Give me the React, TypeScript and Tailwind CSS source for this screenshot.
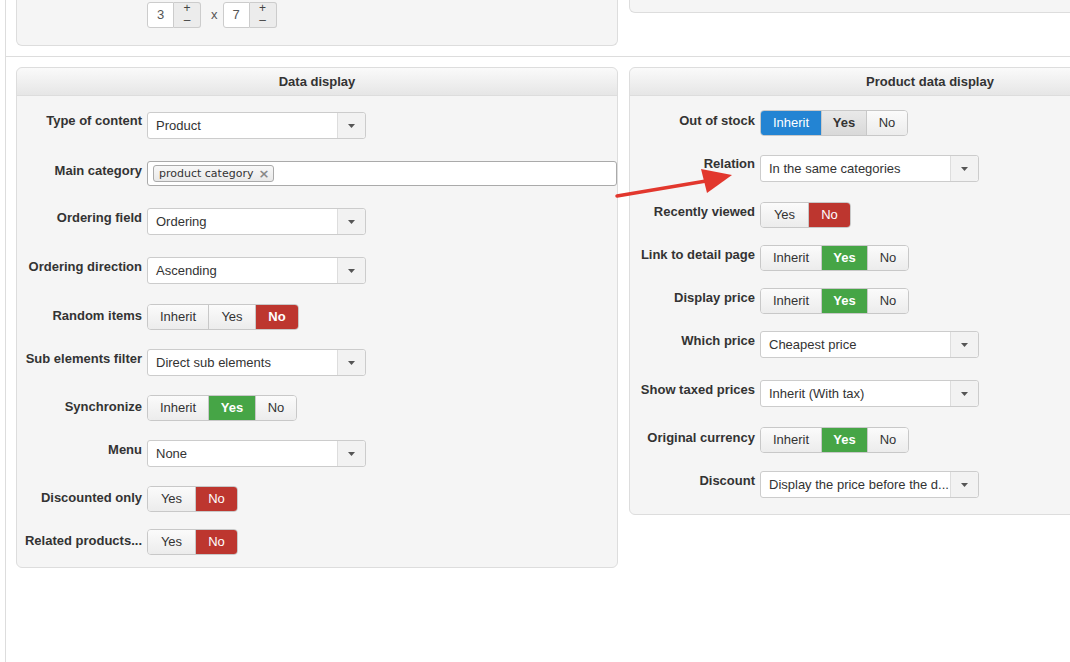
import React from "react";

type Tone = "plain" | "green" | "red" | "blue" | "gray";
type Opt = { label: string; w: string; tone?: Tone; bold?: boolean };

const toneClass: Record<Tone, string> = {
  plain: "bg-gradient-to-b from-[#fbfbfb] to-[#ececec] text-[#333]",
  green: "bg-[#46a546] text-white",
  red: "bg-[#bd362f] text-white",
  blue: "bg-[#2384d3] text-white",
  gray: "bg-gradient-to-b from-[#e9e9e9] to-[#d9d9d9] text-[#333]",
};

function Caret() {
  return (
    <svg width="7" height="4" viewBox="0 0 7 4">
      <path d="M0 0h7L3.5 4z" fill="#555" />
    </svg>
  );
}

function Select({ value }: { value: string }) {
  return (
    <div className="flex h-[27px] w-[219px] rounded-[3px] border border-[#ccc] bg-white">
      <div className="min-w-0 flex-1 whitespace-nowrap pl-[8px] text-[13px] leading-[25px] text-[#333]">
        {value}
      </div>
      <div className="flex w-[28px] shrink-0 items-center justify-center rounded-r-[3px] border-l border-[#ddd] bg-[#f2f2f2]">
        <Caret />
      </div>
    </div>
  );
}

function BtnGroup({ opts }: { opts: Opt[] }) {
  return (
    <div className="flex h-[26px] overflow-hidden rounded-[4px] border border-[#c8c8c8]">
      {opts.map((o, i) => (
        <div
          key={o.label}
          className={`${o.w} ${toneClass[o.tone ?? "plain"]} ${
            i > 0 ? "border-l border-[#c8c8c8]" : ""
          } ${o.bold ? "font-bold" : ""} text-center text-[13px] leading-[24px]`}
        >
          {o.label}
        </div>
      ))}
    </div>
  );
}

function Row({
  label,
  mt,
  pt = "pt-[2px]",
  children,
}: {
  label: string;
  mt: string;
  pt?: string;
  children: React.ReactNode;
}) {
  return (
    <div className={`flex items-start ${mt}`}>
      <div
        className={`w-[130px] shrink-0 whitespace-nowrap pr-[5px] text-right text-[13px] font-bold leading-[16px] text-[#333] ${pt}`}
      >
        {label}
      </div>
      {children}
    </div>
  );
}

function Spinner({ value }: { value: string }) {
  return (
    <div className="flex h-[26px]">
      <div className="w-[27px] rounded-l-[3px] border border-[#ccc] bg-white text-center text-[13px] leading-[24px] text-[#555]">
        {value}
      </div>
      <div className="flex w-[27px] flex-col items-center justify-between rounded-r-[3px] border border-l-0 border-[#ccc] bg-[#ececec] pb-[2px] text-[12px] leading-[10px] text-[#444]">
        <span>+</span>
        <span>–</span>
      </div>
    </div>
  );
}

function Panel({ title, children }: { title: string; children: React.ReactNode }) {
  return (
    <div className="w-[602px] shrink-0 rounded-[6px] border border-[#ddd] bg-[#f5f5f5]">
      <div className="h-[28px] rounded-t-[6px] border-b border-[#ddd] bg-gradient-to-b from-[#fafafa] to-[#e6e6e6] text-center text-[13px] font-bold leading-[27px] text-[#333]">
        {title}
      </div>
      {children}
    </div>
  );
}

const inherit = (tone?: Tone) => ({ label: "Inherit", w: "w-[60px]", tone });

export default function App() {
  return (
    <div className="relative h-[662px] w-[1070px] overflow-hidden bg-white font-['Liberation_Sans',Arial,sans-serif]">
      <div className="ml-[5px] h-full border-l border-[#ddd]">
        {/* top strip */}
        <div className="flex h-[57px] items-start gap-[11px] border-b border-[#ddd] px-[10px]">
          <div className="flex h-[46px] w-[602px] shrink-0 items-start gap-[10px] rounded-b-[6px] border border-t-0 border-[#ddd] bg-[#f5f5f5] pl-[130px] pt-[2px]">
            <Spinner value="3" />
            <span className="text-[13px] leading-[26px] text-[#555]">x</span>
            <div className="-ml-[5px]">
              <Spinner value="7" />
            </div>
          </div>
          <div className="h-[13px] w-[602px] shrink-0 rounded-b-[6px] border border-t-0 border-[#ddd] bg-[#f5f5f5]" />
        </div>

        {/* panels */}
        <div className="flex items-start gap-[11px] px-[10px] pt-[10px]">
          <Panel title="Data display">
            <div className="pb-[12px] pt-[16px]">
              <Row label="Type of content" mt="mt-0" pt="pt-[1px]">
                <Select value="Product" />
              </Row>
              <Row label="Main category" mt="mt-[22px]">
                <div className="flex h-[25px] w-[471px] items-center rounded-[3px] border border-[#aaa] bg-white pl-[5px]">
                  <div className="flex h-[17px] items-center gap-[5px] rounded-[3px] border border-[#aaa] bg-gradient-to-b from-[#f8f8f8] to-[#e9e9e9] pl-[5px] pr-[4px] font-['DejaVu_Sans',Verdana,sans-serif] text-[11px] leading-[15px] text-[#333]">
                    <span>product category</span>
                    <span className="text-[13px] font-bold text-[#888]">×</span>
                  </div>
                </div>
              </Row>
              <Row label="Ordering field" mt="mt-[22px]">
                <Select value="Ordering" />
              </Row>
              <Row label="Ordering direction" mt="mt-[22px]">
                <Select value="Ascending" />
              </Row>
              <Row label="Random items" mt="mt-[20px]" pt="pt-[4px]">
                <BtnGroup
                  opts={[
                    inherit(),
                    { label: "Yes", w: "w-[47px]" },
                    { label: "No", w: "w-[43px]", tone: "red", bold: true },
                  ]}
                />
              </Row>
              <Row label="Sub elements filter" mt="mt-[19px]">
                <Select value="Direct sub elements" />
              </Row>
              <Row label="Synchronize" mt="mt-[19px]" pt="pt-[4px]">
                <BtnGroup
                  opts={[
                    inherit(),
                    { label: "Yes", w: "w-[47px]", tone: "green", bold: true },
                    { label: "No", w: "w-[41px]" },
                  ]}
                />
              </Row>
              <Row label="Menu" mt="mt-[19px]">
                <Select value="None" />
              </Row>
              <Row label="Discounted only" mt="mt-[19px]" pt="pt-[4px]">
                <BtnGroup
                  opts={[
                    { label: "Yes", w: "w-[47px]" },
                    { label: "No", w: "w-[42px]", tone: "red" },
                  ]}
                />
              </Row>
              <Row label="Related products..." mt="mt-[17px]" pt="pt-[4px]">
                <BtnGroup
                  opts={[
                    { label: "Yes", w: "w-[47px]" },
                    { label: "No", w: "w-[42px]", tone: "red" },
                  ]}
                />
              </Row>
            </div>
          </Panel>

          <Panel title="Product data display">
            <div className="pb-[16px] pt-[14px]">
              <Row label="Out of stock" mt="mt-0" pt="pt-[3px]">
                <BtnGroup
                  opts={[
                    inherit("blue"),
                    { label: "Yes", w: "w-[45px]", tone: "gray", bold: true },
                    { label: "No", w: "w-[41px]" },
                  ]}
                />
              </Row>
              <Row label="Relation" mt="mt-[19px]" pt="pt-[1px]">
                <Select value="In the same categories" />
              </Row>
              <Row label="Recently viewed" mt="mt-[20px]" pt="pt-[2px]">
                <BtnGroup
                  opts={[
                    { label: "Yes", w: "w-[47px]" },
                    { label: "No", w: "w-[42px]", tone: "red" },
                  ]}
                />
              </Row>
              <Row label="Link to detail page" mt="mt-[17px]" pt="pt-[2px]">
                <BtnGroup
                  opts={[
                    inherit(),
                    { label: "Yes", w: "w-[46px]", tone: "green", bold: true },
                    { label: "No", w: "w-[41px]" },
                  ]}
                />
              </Row>
              <Row label="Display price" mt="mt-[17px]" pt="pt-[2px]">
                <BtnGroup
                  opts={[
                    inherit(),
                    { label: "Yes", w: "w-[46px]", tone: "green", bold: true },
                    { label: "No", w: "w-[41px]" },
                  ]}
                />
              </Row>
              <Row label="Which price" mt="mt-[17px]">
                <Select value="Cheapest price" />
              </Row>
              <Row label="Show taxed prices" mt="mt-[22px]">
                <Select value="Inherit (With tax)" />
              </Row>
              <Row label="Original currency" mt="mt-[20px]" pt="pt-[3px]">
                <BtnGroup
                  opts={[
                    inherit(),
                    { label: "Yes", w: "w-[46px]", tone: "green", bold: true },
                    { label: "No", w: "w-[41px]" },
                  ]}
                />
              </Row>
              <Row label="Discount" mt="mt-[18px]">
                <Select value="Display the price before the d..." />
              </Row>
            </div>
          </Panel>
        </div>
      </div>

      {/* annotation arrow */}
      <svg className="pointer-events-none absolute left-0 top-0" width="1070" height="662">
        <line x1="617" y1="196" x2="712" y2="180" stroke="#e2372d" strokeWidth="3.5" strokeLinecap="round" />
        <polygon points="701,169 732,175 707,193" fill="#e2372d" />
      </svg>
    </div>
  );
}
